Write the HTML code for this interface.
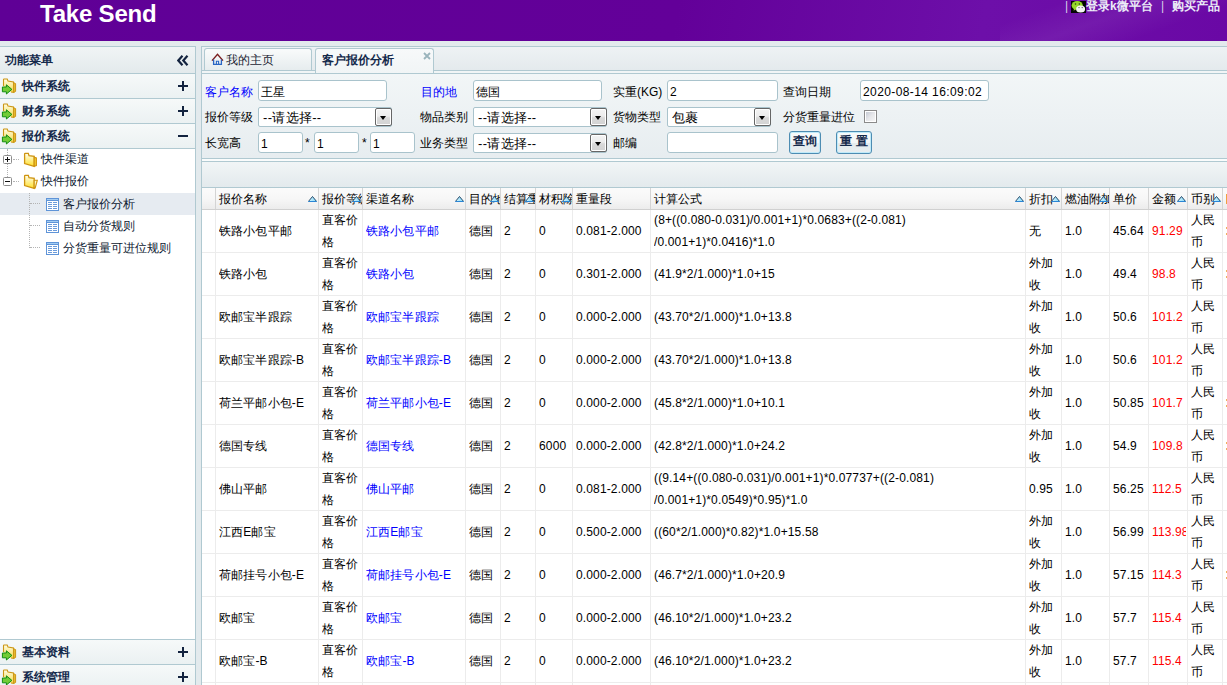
<!DOCTYPE html>
<html><head><meta charset="utf-8">
<style>
*{box-sizing:border-box}
html,body{margin:0;padding:0}
body{width:1227px;height:685px;overflow:hidden;position:relative;background:#e3eaed;font-family:"Liberation Sans",sans-serif;font-size:12px;color:#000}
.a{position:absolute}
.hd{left:0;top:0;width:1227px;height:41px;background:linear-gradient(100deg,#5f0096 0%,#630099 55%,#6d0fa9 80%,#6a08a5 100%);overflow:hidden}
.logo{left:40px;top:2px;font-size:24px;letter-spacing:-0.2px;font-weight:bold;color:#fff;line-height:24px;white-space:nowrap}
.hl{color:#ececf8;top:0px;line-height:13px;white-space:nowrap;font-weight:bold}
.ph{left:0;width:195px;background:linear-gradient(#f0f4f5,#e3eaec);border-bottom:1px solid #b0c9d1}
.pht{left:22px;font-weight:bold;color:#14294b;line-height:14px;white-space:nowrap}
.tr{left:0;width:195px;height:22px}
.trt{line-height:14px;color:#0c1830;white-space:nowrap}
.inp{background:#fff;border:1px solid #a9c3cc;border-radius:3px;height:21px;line-height:19px;padding-top:2px;padding-left:2px;white-space:nowrap}
.sel{background:#fff;border:1px solid #a9c3cc;border-radius:2px;height:20px;line-height:18px;padding-top:1px;padding-left:4px;white-space:nowrap;font-size:13px;letter-spacing:0.3px}
.dd{top:0px;width:17px;height:18px;background:linear-gradient(#f4f4f4 0%,#ececec 45%,#d9d9d9 55%,#d3d3d3 100%);border:1px solid #666;border-radius:2px;box-shadow:inset 0 0 0 1px #fff}
.dd:after{content:"";position:absolute;left:4px;top:7px;border-left:3.5px solid transparent;border-right:3.5px solid transparent;border-top:4px solid #000}
.lb{white-space:nowrap;line-height:14px}
.btn{height:23px;border:1px solid #4d8cb2;border-radius:3px;background:linear-gradient(#f8fafb 0%,#f3f6f7 50%,#e4ebee 52%,#e7edf0 100%);box-shadow:inset 0 0 0 1px #bfeaf9;font-weight:bold;color:#14294b;line-height:19px;text-align:center;white-space:nowrap}
.gh{top:188px;height:21px;background:linear-gradient(#fbfbfb 0%,#f7f7f7 50%,#ececec 100%)}
.hc{top:1px;height:20px;line-height:20px;white-space:nowrap;overflow:hidden;padding-left:4px}
.vl{width:1px;background:#ececec}
.hvl{width:1px;background:#d4d4d4}
.cell{white-space:nowrap;overflow:hidden;line-height:22px;letter-spacing:0.14px}
.lk{color:#0000ff}
.rd{color:#ff0000}
.arr{width:9px;height:6px}
</style></head><body>
<div class="a hd"><div class="a" style="left:1000px;top:-40px;width:260px;height:120px;background:linear-gradient(160deg,rgba(255,255,255,0) 30%,rgba(255,255,255,0.06) 45%,rgba(255,255,255,0) 60%)"></div><div class="a logo">Take Send</div><div class="a hl" style="left:1065px;font-weight:normal;color:#d8d0e8">|</div><svg class="a" style="left:1071px;top:1px" width="15" height="12" viewBox="0 0 15 12"><rect width="15" height="12" fill="#050505"/><ellipse cx="6.2" cy="4.4" rx="5.6" ry="4.3" fill="#96d82a"/><path d="M3 7.5 L2.6 9.8 L5 8.3 Z" fill="#96d82a"/><circle cx="4.5" cy="2.9" r=".75" fill="#2a3a10"/><circle cx="8.3" cy="2.9" r=".75" fill="#2a3a10"/><ellipse cx="9.6" cy="8" rx="4.5" ry="3.5" fill="#f4f4f4"/><circle cx="8" cy="6.6" r=".65" fill="#555"/><circle cx="11.2" cy="6.6" r=".65" fill="#555"/></svg><div class="a hl" style="left:1086px;">登录k微平台</div><div class="a hl" style="left:1161px;font-weight:normal;color:#d8d0e8">|</div><div class="a hl" style="left:1172px;">购买产品</div></div>
<div class="a" style="left:0;top:46px;width:196px;height:639px;background:#fff;border-right:1px solid #b0c9d1;border-top:1px solid #b0c9d1"></div><div class="a ph" style="top:47px;height:27px"></div><div class="a pht" style="left:5px;top:53px">功能菜单</div><svg class="a" style="left:177px;top:55px" width="12" height="11" viewBox="0 0 12 11"><path d="M5.5 0.8 L1.3 5.5 L5.5 10.2 M10.5 0.8 L6.3 5.5 L10.5 10.2" fill="none" stroke="#13233f" stroke-width="2.2"/></svg><div class="a ph" style="top:74px;height:25px;background:linear-gradient(#f6f9f9,#ebf1f2)"></div><svg class="a" style="left:0px;top:76px" width="20" height="20" viewBox="0 0 20 20"><defs><linearGradient id="fg" x1="0" y1="0" x2="0" y2="1"><stop offset="0" stop-color="#fffce0"/><stop offset="1" stop-color="#f6dc50"/></linearGradient></defs><path d="M3.5 10 V3.6 Q3.5 3 4.1 3 H7.2 L8 5 L13.5 6 V16.3 L11 16" fill="url(#fg)" stroke="#cc9614" stroke-width="1.1"/><path d="M13.8 6.8 L15.6 7.6 V15.4 L13.8 16.4 Z" fill="#f0c63a" stroke="#cc9614" stroke-width="1"/><path d="M2.4 11 H6.4 V8.8 L11.9 13.4 L6.4 18 V15.8 H2.4 Z" fill="#72cc36" stroke="#128c12" stroke-width="1"/></svg><div class="a pht" style="top:79px">快件系统</div><svg class="a" style="left:178px;top:81px" width="10" height="10" viewBox="0 0 10 10"><path d="M0 5 H10 M5 0 V10" stroke="#13233f" stroke-width="2"/></svg><div class="a ph" style="top:99px;height:25px;background:linear-gradient(#f6f9f9,#ebf1f2)"></div><svg class="a" style="left:0px;top:101px" width="20" height="20" viewBox="0 0 20 20"><defs><linearGradient id="fg" x1="0" y1="0" x2="0" y2="1"><stop offset="0" stop-color="#fffce0"/><stop offset="1" stop-color="#f6dc50"/></linearGradient></defs><path d="M3.5 10 V3.6 Q3.5 3 4.1 3 H7.2 L8 5 L13.5 6 V16.3 L11 16" fill="url(#fg)" stroke="#cc9614" stroke-width="1.1"/><path d="M13.8 6.8 L15.6 7.6 V15.4 L13.8 16.4 Z" fill="#f0c63a" stroke="#cc9614" stroke-width="1"/><path d="M2.4 11 H6.4 V8.8 L11.9 13.4 L6.4 18 V15.8 H2.4 Z" fill="#72cc36" stroke="#128c12" stroke-width="1"/></svg><div class="a pht" style="top:104px">财务系统</div><svg class="a" style="left:178px;top:106px" width="10" height="10" viewBox="0 0 10 10"><path d="M0 5 H10 M5 0 V10" stroke="#13233f" stroke-width="2"/></svg><div class="a ph" style="top:124px;height:25px;background:linear-gradient(#f6f9f9,#ebf1f2)"></div><svg class="a" style="left:0px;top:126px" width="20" height="20" viewBox="0 0 20 20"><defs><linearGradient id="fg" x1="0" y1="0" x2="0" y2="1"><stop offset="0" stop-color="#fffce0"/><stop offset="1" stop-color="#f6dc50"/></linearGradient></defs><path d="M3.5 10 V3.6 Q3.5 3 4.1 3 H7.2 L8 5 L13.5 6 V16.3 L11 16" fill="url(#fg)" stroke="#cc9614" stroke-width="1.1"/><path d="M13.8 6.8 L15.6 7.6 V15.4 L13.8 16.4 Z" fill="#f0c63a" stroke="#cc9614" stroke-width="1"/><path d="M2.4 11 H6.4 V8.8 L11.9 13.4 L6.4 18 V15.8 H2.4 Z" fill="#72cc36" stroke="#128c12" stroke-width="1"/></svg><div class="a pht" style="top:129px">报价系统</div><svg class="a" style="left:178px;top:131px" width="10" height="10" viewBox="0 0 10 10"><path d="M0 5 H10" stroke="#13233f" stroke-width="2"/></svg><div class="a" style="left:0;top:639px;width:195px;height:1px;background:#b0c9d1"></div><div class="a ph" style="top:640px;height:25px;background:linear-gradient(#f6f9f9,#ebf1f2)"></div><svg class="a" style="left:0px;top:642px" width="20" height="20" viewBox="0 0 20 20"><defs><linearGradient id="fg" x1="0" y1="0" x2="0" y2="1"><stop offset="0" stop-color="#fffce0"/><stop offset="1" stop-color="#f6dc50"/></linearGradient></defs><path d="M3.5 10 V3.6 Q3.5 3 4.1 3 H7.2 L8 5 L13.5 6 V16.3 L11 16" fill="url(#fg)" stroke="#cc9614" stroke-width="1.1"/><path d="M13.8 6.8 L15.6 7.6 V15.4 L13.8 16.4 Z" fill="#f0c63a" stroke="#cc9614" stroke-width="1"/><path d="M2.4 11 H6.4 V8.8 L11.9 13.4 L6.4 18 V15.8 H2.4 Z" fill="#72cc36" stroke="#128c12" stroke-width="1"/></svg><div class="a pht" style="top:645px">基本资料</div><svg class="a" style="left:178px;top:647px" width="10" height="10" viewBox="0 0 10 10"><path d="M0 5 H10 M5 0 V10" stroke="#13233f" stroke-width="2"/></svg><div class="a" style="left:0;top:664px;width:195px;height:1px;background:#b0c9d1"></div><div class="a ph" style="top:665px;height:25px;background:linear-gradient(#f6f9f9,#ebf1f2)"></div><svg class="a" style="left:0px;top:667px" width="20" height="20" viewBox="0 0 20 20"><defs><linearGradient id="fg" x1="0" y1="0" x2="0" y2="1"><stop offset="0" stop-color="#fffce0"/><stop offset="1" stop-color="#f6dc50"/></linearGradient></defs><path d="M3.5 10 V3.6 Q3.5 3 4.1 3 H7.2 L8 5 L13.5 6 V16.3 L11 16" fill="url(#fg)" stroke="#cc9614" stroke-width="1.1"/><path d="M13.8 6.8 L15.6 7.6 V15.4 L13.8 16.4 Z" fill="#f0c63a" stroke="#cc9614" stroke-width="1"/><path d="M2.4 11 H6.4 V8.8 L11.9 13.4 L6.4 18 V15.8 H2.4 Z" fill="#72cc36" stroke="#128c12" stroke-width="1"/></svg><div class="a pht" style="top:670px">系统管理</div><svg class="a" style="left:178px;top:672px" width="10" height="10" viewBox="0 0 10 10"><path d="M0 5 H10 M5 0 V10" stroke="#13233f" stroke-width="2"/></svg><div class="a" style="left:0;top:193px;width:195px;height:22px;background:#e6ebf1"></div><div class="a" style="left:7px;top:149px;width:0;height:6px;border-left:1px dotted #b4b4b4"></div><div class="a" style="left:7px;top:164px;width:0;height:13px;border-left:1px dotted #b4b4b4"></div><div class="a" style="left:13px;top:159px;width:6px;height:0;border-top:1px dotted #b4b4b4"></div><div class="a" style="left:13px;top:181px;width:6px;height:0;border-top:1px dotted #b4b4b4"></div><div class="a" style="left:29px;top:193px;width:0;height:55px;border-left:1px dotted #b4b4b4"></div><div class="a" style="left:30px;top:203px;width:10px;height:0;border-top:1px dotted #b4b4b4"></div><div class="a" style="left:30px;top:225px;width:10px;height:0;border-top:1px dotted #b4b4b4"></div><div class="a" style="left:30px;top:247px;width:10px;height:0;border-top:1px dotted #b4b4b4"></div><svg class="a" style="left:3px;top:155px" width="9" height="9" viewBox="0 0 9 9"><rect x=".5" y=".5" width="8" height="8" rx="1" fill="#fff" stroke="#8c8c8c"/><path d="M2 4.5 H7 M4.5 2 V7" stroke="#111" stroke-width="1"/></svg><svg class="a" style="left:3px;top:177px" width="9" height="9" viewBox="0 0 9 9"><rect x=".5" y=".5" width="8" height="8" rx="1" fill="#fff" stroke="#8c8c8c"/><path d="M2 4.5 H7" stroke="#111" stroke-width="1"/></svg><svg class="a" style="left:20px;top:150px" width="20" height="20" viewBox="0 0 20 20"><defs><linearGradient id="tg" x1="0" y1="0" x2="0" y2="1"><stop offset="0" stop-color="#fffef0"/><stop offset="1" stop-color="#ffe02a"/></linearGradient></defs><path d="M4.6 13.6 V3.9 Q4.6 3.3 5.2 3.3 H8.3 L9 5.6 L14.2 6.4 V16.3 Z" fill="url(#tg)" stroke="#cf9410" stroke-width="1.3"/><path d="M14.2 7.2 L16.4 8 V15.6 L14.2 16.3 Z" fill="#f4cc30" stroke="#cf9410" stroke-width="1.1"/></svg><svg class="a" style="left:20px;top:172px" width="20" height="20" viewBox="0 0 20 20"><defs><linearGradient id="tg" x1="0" y1="0" x2="0" y2="1"><stop offset="0" stop-color="#fffef0"/><stop offset="1" stop-color="#ffe02a"/></linearGradient></defs><path d="M4.6 13.6 V3.9 Q4.6 3.3 5.2 3.3 H8.3 L9 5.6 L14.2 6.4 V16.3 Z" fill="url(#tg)" stroke="#cf9410" stroke-width="1.3"/><path d="M14.2 8.2 L17.3 8.2 L15.2 16 L14.2 16.3 Z" fill="#fff8c0" stroke="#cf9410" stroke-width="1.1"/></svg><div class="a trt" style="left:41px;top:152px">快件渠道</div><div class="a trt" style="left:41px;top:174px">快件报价</div><svg class="a" style="left:46px;top:198px" width="13" height="13" viewBox="0 0 13 13"><rect x=".5" y=".5" width="12" height="12" fill="#fff" stroke="#5f94d8"/><rect x="1" y="1" width="11" height="1" fill="#a4cdf2"/><path d="M1 2.5 H12" stroke="#5f94d8"/><path d="M2 4.5 H6 M7 4.5 H11 M2 6.5 H6 M7 6.5 H11 M2 8.5 H6 M7 8.5 H11 M2 10.5 H6 M7 10.5 H11" stroke="#6b9bdb" stroke-width="1"/></svg><div class="a trt" style="left:63px;top:197px">客户报价分析</div><svg class="a" style="left:46px;top:220px" width="13" height="13" viewBox="0 0 13 13"><rect x=".5" y=".5" width="12" height="12" fill="#fff" stroke="#5f94d8"/><rect x="1" y="1" width="11" height="1" fill="#a4cdf2"/><path d="M1 2.5 H12" stroke="#5f94d8"/><path d="M2 4.5 H6 M7 4.5 H11 M2 6.5 H6 M7 6.5 H11 M2 8.5 H6 M7 8.5 H11 M2 10.5 H6 M7 10.5 H11" stroke="#6b9bdb" stroke-width="1"/></svg><div class="a trt" style="left:63px;top:219px">自动分货规则</div><svg class="a" style="left:46px;top:242px" width="13" height="13" viewBox="0 0 13 13"><rect x=".5" y=".5" width="12" height="12" fill="#fff" stroke="#5f94d8"/><rect x="1" y="1" width="11" height="1" fill="#a4cdf2"/><path d="M1 2.5 H12" stroke="#5f94d8"/><path d="M2 4.5 H6 M7 4.5 H11 M2 6.5 H6 M7 6.5 H11 M2 8.5 H6 M7 8.5 H11 M2 10.5 H6 M7 10.5 H11" stroke="#6b9bdb" stroke-width="1"/></svg><div class="a trt" style="left:63px;top:241px">分货重量可进位规则</div><div class="a" style="left:201px;top:46px;width:1026px;height:639px;background:#fff;border-left:1px solid #b0c9d1;border-top:1px solid #b0c9d1"></div><div class="a" style="left:202px;top:47px;width:1025px;height:24px;background:linear-gradient(#eef2f4,#e4eaed);border-bottom:1px solid #b0c9d1"></div><div class="a" style="left:202px;top:71px;width:1025px;height:3px;background:#f1f5f6;border-bottom:1px solid #b0c9d1"></div><div class="a" style="left:204px;top:48px;width:108px;height:22px;border:1px solid #b0c9d1;border-bottom:none;border-radius:3px 3px 0 0;background:linear-gradient(#f9fbfb,#e6ecee)"></div><svg class="a" style="left:211px;top:53px" width="13" height="13" viewBox="0 0 13 13"><path d="M1 7.6 L6.5 1.2 L12 7.6" fill="none" stroke="#7a1c1c" stroke-width="1.4"/><path d="M2.6 6.6 V11.4 H10.4 V6.6" fill="none" stroke="#2a66c4" stroke-width="1.3"/><path d="M5.4 11.4 V8.2 H7.6 V11.4" fill="none" stroke="#2a66c4" stroke-width="1.1"/></svg><div class="a lb" style="left:226px;top:53px;color:#1c2433">我的主页</div><div class="a" style="left:315px;top:48px;width:119px;height:25px;border:1px solid #b0c9d1;border-bottom:none;border-radius:3px 3px 0 0;background:linear-gradient(#f7f9fa,#f1f5f6)"></div><div class="a lb" style="left:322px;top:53px;font-weight:bold;color:#14294b">客户报价分析</div><svg class="a" style="left:423px;top:52px" width="8" height="8" viewBox="0 0 8 8"><path d="M1 1 L7 7 M7 1 L1 7" stroke="#9ab4bc" stroke-width="1.8"/></svg><div class="a" style="left:202px;top:74px;width:1025px;height:85px;background:linear-gradient(#f2f6f7,#e7edf0);border-bottom:1px solid #b0c9d1"></div><div class="a" style="left:202px;top:159px;width:1025px;height:3px;background:#fafcfc;border-bottom:1px solid #b0c9d1"></div><div class="a" style="left:202px;top:162px;width:1025px;height:26px;background:linear-gradient(#f1f5f6,#e3eaed);border-bottom:1px solid #b0c9d1"></div><div class="a lb" style="left:205px;top:85px;color:#0000ff;">客户名称</div><div class="a inp" style="left:258px;top:80px;width:129px">王星</div><div class="a lb" style="left:421px;top:85px;color:#0000ff;">目的地</div><div class="a inp" style="left:473px;top:80px;width:129px">德国</div><div class="a lb" style="left:613px;top:85px;">实重(KG)</div><div class="a inp" style="left:667px;top:80px;width:111px">2</div><div class="a lb" style="left:783px;top:85px;">查询日期</div><div class="a inp" style="left:860px;top:80px;width:129px;letter-spacing:0.4px">2020-08-14 16:09:02</div><div class="a lb" style="left:205px;top:110px;">报价等级</div><div class="a sel" style="left:258px;top:107px;width:134px">--请选择--<div class="a dd" style="left:116px"></div></div><div class="a lb" style="left:420px;top:110px;">物品类别</div><div class="a sel" style="left:473px;top:107px;width:134px">--请选择--<div class="a dd" style="left:116px"></div></div><div class="a lb" style="left:613px;top:110px;">货物类型</div><div class="a sel" style="left:667px;top:107px;width:104px">包裹<div class="a dd" style="left:86px"></div></div><div class="a lb" style="left:783px;top:110px;">分货重量进位</div><div class="a" style="left:864px;top:110px;width:13px;height:13px;border:1px solid #8a8a8a;background:linear-gradient(135deg,#bfc4cf 0%,#e6e7ea 50%,#f8f8f8 100%);box-shadow:inset 0 0 0 1px #fff"></div><div class="a lb" style="left:205px;top:136px;">长宽高</div><div class="a inp" style="left:258px;top:132px;width:45px">1</div><div class="a lb" style="left:305px;top:136px;">*</div><div class="a inp" style="left:314px;top:132px;width:45px">1</div><div class="a lb" style="left:362px;top:136px;">*</div><div class="a inp" style="left:370px;top:132px;width:45px">1</div><div class="a lb" style="left:420px;top:136px;">业务类型</div><div class="a sel" style="left:473px;top:133px;width:134px">--请选择--<div class="a dd" style="left:116px"></div></div><div class="a lb" style="left:613px;top:136px;">邮编</div><div class="a inp" style="left:667px;top:132px;width:111px"></div><div class="a btn" style="left:789px;top:131px;width:32px">查询</div><div class="a btn" style="left:836px;top:131px;width:36px">重 置</div><div class="a gh" style="left:202px;width:1025px"></div><div class="a" style="left:202px;top:209px;width:1025px;height:1px;background:#d0d0d0"></div><div class="a hvl" style="left:215px;top:188px;height:21px"></div><div class="a" style="left:215px;top:188px;width:103px;height:21px;overflow:hidden"><div class="a hc" style="left:0;width:103px">报价名称</div><svg class="a arr" style="left:93px;top:8px" width="9" height="6" viewBox="0 0 9 6"><defs><linearGradient id="ag1" x1="0" y1="0" x2="1" y2="0"><stop offset="0" stop-color="#d9f6ff"/><stop offset="1" stop-color="#7fd6f7"/></linearGradient></defs><path d="M4.5 0.3 L8.8 5.6 H0.2 Z" fill="url(#ag1)"/><path d="M0.4 5.5 L4.5 0.5 L8.6 5.5" fill="none" stroke="#1a3a5a" stroke-width="0.9"/><path d="M0.3 5.5 H8.7" stroke="#2a86d6" stroke-width="1"/></svg></div><div class="a hvl" style="left:318px;top:188px;height:21px"></div><div class="a" style="left:318px;top:188px;width:44px;height:21px;overflow:hidden"><div class="a hc" style="left:0;width:44px">报价等级</div><svg class="a arr" style="left:34px;top:8px" width="9" height="6" viewBox="0 0 9 6"><defs><linearGradient id="ag2" x1="0" y1="0" x2="1" y2="0"><stop offset="0" stop-color="#d9f6ff"/><stop offset="1" stop-color="#7fd6f7"/></linearGradient></defs><path d="M4.5 0.3 L8.8 5.6 H0.2 Z" fill="url(#ag2)"/><path d="M0.4 5.5 L4.5 0.5 L8.6 5.5" fill="none" stroke="#1a3a5a" stroke-width="0.9"/><path d="M0.3 5.5 H8.7" stroke="#2a86d6" stroke-width="1"/></svg></div><div class="a hvl" style="left:362px;top:188px;height:21px"></div><div class="a" style="left:362px;top:188px;width:103px;height:21px;overflow:hidden"><div class="a hc" style="left:0;width:103px">渠道名称</div><svg class="a arr" style="left:93px;top:8px" width="9" height="6" viewBox="0 0 9 6"><defs><linearGradient id="ag3" x1="0" y1="0" x2="1" y2="0"><stop offset="0" stop-color="#d9f6ff"/><stop offset="1" stop-color="#7fd6f7"/></linearGradient></defs><path d="M4.5 0.3 L8.8 5.6 H0.2 Z" fill="url(#ag3)"/><path d="M0.4 5.5 L4.5 0.5 L8.6 5.5" fill="none" stroke="#1a3a5a" stroke-width="0.9"/><path d="M0.3 5.5 H8.7" stroke="#2a86d6" stroke-width="1"/></svg></div><div class="a hvl" style="left:465px;top:188px;height:21px"></div><div class="a" style="left:465px;top:188px;width:35px;height:21px;overflow:hidden"><div class="a hc" style="left:0;width:35px">目的地</div><svg class="a arr" style="left:25px;top:8px" width="9" height="6" viewBox="0 0 9 6"><defs><linearGradient id="ag4" x1="0" y1="0" x2="1" y2="0"><stop offset="0" stop-color="#d9f6ff"/><stop offset="1" stop-color="#7fd6f7"/></linearGradient></defs><path d="M4.5 0.3 L8.8 5.6 H0.2 Z" fill="url(#ag4)"/><path d="M0.4 5.5 L4.5 0.5 L8.6 5.5" fill="none" stroke="#1a3a5a" stroke-width="0.9"/><path d="M0.3 5.5 H8.7" stroke="#2a86d6" stroke-width="1"/></svg></div><div class="a hvl" style="left:500px;top:188px;height:21px"></div><div class="a" style="left:500px;top:188px;width:35px;height:21px;overflow:hidden"><div class="a hc" style="left:0;width:35px">结算重量</div><svg class="a arr" style="left:25px;top:8px" width="9" height="6" viewBox="0 0 9 6"><defs><linearGradient id="ag5" x1="0" y1="0" x2="1" y2="0"><stop offset="0" stop-color="#d9f6ff"/><stop offset="1" stop-color="#7fd6f7"/></linearGradient></defs><path d="M4.5 0.3 L8.8 5.6 H0.2 Z" fill="url(#ag5)"/><path d="M0.4 5.5 L4.5 0.5 L8.6 5.5" fill="none" stroke="#1a3a5a" stroke-width="0.9"/><path d="M0.3 5.5 H8.7" stroke="#2a86d6" stroke-width="1"/></svg></div><div class="a hvl" style="left:535px;top:188px;height:21px"></div><div class="a" style="left:535px;top:188px;width:37px;height:21px;overflow:hidden"><div class="a hc" style="left:0;width:37px">材积除</div><svg class="a arr" style="left:27px;top:8px" width="9" height="6" viewBox="0 0 9 6"><defs><linearGradient id="ag6" x1="0" y1="0" x2="1" y2="0"><stop offset="0" stop-color="#d9f6ff"/><stop offset="1" stop-color="#7fd6f7"/></linearGradient></defs><path d="M4.5 0.3 L8.8 5.6 H0.2 Z" fill="url(#ag6)"/><path d="M0.4 5.5 L4.5 0.5 L8.6 5.5" fill="none" stroke="#1a3a5a" stroke-width="0.9"/><path d="M0.3 5.5 H8.7" stroke="#2a86d6" stroke-width="1"/></svg></div><div class="a hvl" style="left:572px;top:188px;height:21px"></div><div class="a" style="left:572px;top:188px;width:78px;height:21px;overflow:hidden"><div class="a hc" style="left:0;width:78px">重量段</div></div><div class="a hvl" style="left:650px;top:188px;height:21px"></div><div class="a" style="left:650px;top:188px;width:375px;height:21px;overflow:hidden"><div class="a hc" style="left:0;width:375px">计算公式</div><svg class="a arr" style="left:365px;top:8px" width="9" height="6" viewBox="0 0 9 6"><defs><linearGradient id="ag8" x1="0" y1="0" x2="1" y2="0"><stop offset="0" stop-color="#d9f6ff"/><stop offset="1" stop-color="#7fd6f7"/></linearGradient></defs><path d="M4.5 0.3 L8.8 5.6 H0.2 Z" fill="url(#ag8)"/><path d="M0.4 5.5 L4.5 0.5 L8.6 5.5" fill="none" stroke="#1a3a5a" stroke-width="0.9"/><path d="M0.3 5.5 H8.7" stroke="#2a86d6" stroke-width="1"/></svg></div><div class="a hvl" style="left:1025px;top:188px;height:21px"></div><div class="a" style="left:1025px;top:188px;width:36px;height:21px;overflow:hidden"><div class="a hc" style="left:0;width:36px">折扣</div><svg class="a arr" style="left:26px;top:8px" width="9" height="6" viewBox="0 0 9 6"><defs><linearGradient id="ag9" x1="0" y1="0" x2="1" y2="0"><stop offset="0" stop-color="#d9f6ff"/><stop offset="1" stop-color="#7fd6f7"/></linearGradient></defs><path d="M4.5 0.3 L8.8 5.6 H0.2 Z" fill="url(#ag9)"/><path d="M0.4 5.5 L4.5 0.5 L8.6 5.5" fill="none" stroke="#1a3a5a" stroke-width="0.9"/><path d="M0.3 5.5 H8.7" stroke="#2a86d6" stroke-width="1"/></svg></div><div class="a hvl" style="left:1061px;top:188px;height:21px"></div><div class="a" style="left:1061px;top:188px;width:48px;height:21px;overflow:hidden"><div class="a hc" style="left:0;width:48px">燃油附加</div><svg class="a arr" style="left:38px;top:8px" width="9" height="6" viewBox="0 0 9 6"><defs><linearGradient id="ag10" x1="0" y1="0" x2="1" y2="0"><stop offset="0" stop-color="#d9f6ff"/><stop offset="1" stop-color="#7fd6f7"/></linearGradient></defs><path d="M4.5 0.3 L8.8 5.6 H0.2 Z" fill="url(#ag10)"/><path d="M0.4 5.5 L4.5 0.5 L8.6 5.5" fill="none" stroke="#1a3a5a" stroke-width="0.9"/><path d="M0.3 5.5 H8.7" stroke="#2a86d6" stroke-width="1"/></svg></div><div class="a hvl" style="left:1109px;top:188px;height:21px"></div><div class="a" style="left:1109px;top:188px;width:39px;height:21px;overflow:hidden"><div class="a hc" style="left:0;width:39px">单价</div></div><div class="a hvl" style="left:1148px;top:188px;height:21px"></div><div class="a" style="left:1148px;top:188px;width:39px;height:21px;overflow:hidden"><div class="a hc" style="left:0;width:39px">金额</div><svg class="a arr" style="left:29px;top:8px" width="9" height="6" viewBox="0 0 9 6"><defs><linearGradient id="ag12" x1="0" y1="0" x2="1" y2="0"><stop offset="0" stop-color="#d9f6ff"/><stop offset="1" stop-color="#7fd6f7"/></linearGradient></defs><path d="M4.5 0.3 L8.8 5.6 H0.2 Z" fill="url(#ag12)"/><path d="M0.4 5.5 L4.5 0.5 L8.6 5.5" fill="none" stroke="#1a3a5a" stroke-width="0.9"/><path d="M0.3 5.5 H8.7" stroke="#2a86d6" stroke-width="1"/></svg></div><div class="a hvl" style="left:1187px;top:188px;height:21px"></div><div class="a" style="left:1187px;top:188px;width:35px;height:21px;overflow:hidden"><div class="a hc" style="left:0;width:35px">币别</div><svg class="a arr" style="left:25px;top:8px" width="9" height="6" viewBox="0 0 9 6"><defs><linearGradient id="ag13" x1="0" y1="0" x2="1" y2="0"><stop offset="0" stop-color="#d9f6ff"/><stop offset="1" stop-color="#7fd6f7"/></linearGradient></defs><path d="M4.5 0.3 L8.8 5.6 H0.2 Z" fill="url(#ag13)"/><path d="M0.4 5.5 L4.5 0.5 L8.6 5.5" fill="none" stroke="#1a3a5a" stroke-width="0.9"/><path d="M0.3 5.5 H8.7" stroke="#2a86d6" stroke-width="1"/></svg></div><div class="a hvl" style="left:1222px;top:188px;height:21px"></div><div class="a" style="left:1222px;top:188px;width:78px;height:21px;overflow:hidden"><div class="a hc" style="left:0;width:78px"></div></div><div class="a hvl" style="left:1300px;top:188px;height:21px"></div><div class="a" style="left:1226px;top:194px;width:1px;height:10px;background:#f0a040"></div><div class="a cell" style="left:219px;top:210px;width:98px;height:42px;display:flex;align-items:center"><div>铁路小包平邮</div></div><div class="a cell" style="left:322px;top:210px;width:39px;height:42px;display:flex;align-items:center"><div>直客价<br>格</div></div><div class="a cell lk" style="left:366px;top:210px;width:98px;height:42px;display:flex;align-items:center"><div>铁路小包平邮</div></div><div class="a cell" style="left:469px;top:210px;width:30px;height:42px;display:flex;align-items:center"><div>德国</div></div><div class="a cell" style="left:504px;top:210px;width:30px;height:42px;display:flex;align-items:center"><div>2</div></div><div class="a cell" style="left:539px;top:210px;width:32px;height:42px;display:flex;align-items:center"><div>0</div></div><div class="a cell" style="left:576px;top:210px;width:73px;height:42px;display:flex;align-items:center"><div>0.081-2.000</div></div><div class="a cell" style="left:654px;top:210px;width:370px;height:42px;display:flex;align-items:center"><div>(8+((0.080-0.031)/0.001+1)*0.0683+((2-0.081)<br>/0.001+1)*0.0416)*1.0</div></div><div class="a cell" style="left:1029px;top:210px;width:31px;height:42px;display:flex;align-items:center"><div>无</div></div><div class="a cell" style="left:1065px;top:210px;width:43px;height:42px;display:flex;align-items:center"><div>1.0</div></div><div class="a cell" style="left:1113px;top:210px;width:34px;height:42px;display:flex;align-items:center"><div>45.64</div></div><div class="a cell rd" style="left:1152px;top:210px;width:34px;height:42px;display:flex;align-items:center"><div>91.29</div></div><div class="a cell" style="left:1191px;top:210px;width:30px;height:42px;display:flex;align-items:center"><div>人民<br>币</div></div><div class="a cell" style="left:1226px;top:210px;width:73px;height:42px;display:flex;align-items:center"><div></div></div><div class="a" style="left:202px;top:252px;width:1025px;height:1px;background:#ececec"></div><div class="a cell" style="left:219px;top:253px;width:98px;height:42px;display:flex;align-items:center"><div>铁路小包</div></div><div class="a cell" style="left:322px;top:253px;width:39px;height:42px;display:flex;align-items:center"><div>直客价<br>格</div></div><div class="a cell lk" style="left:366px;top:253px;width:98px;height:42px;display:flex;align-items:center"><div>铁路小包</div></div><div class="a cell" style="left:469px;top:253px;width:30px;height:42px;display:flex;align-items:center"><div>德国</div></div><div class="a cell" style="left:504px;top:253px;width:30px;height:42px;display:flex;align-items:center"><div>2</div></div><div class="a cell" style="left:539px;top:253px;width:32px;height:42px;display:flex;align-items:center"><div>0</div></div><div class="a cell" style="left:576px;top:253px;width:73px;height:42px;display:flex;align-items:center"><div>0.301-2.000</div></div><div class="a cell" style="left:654px;top:253px;width:370px;height:42px;display:flex;align-items:center"><div>(41.9*2/1.000)*1.0+15</div></div><div class="a cell" style="left:1029px;top:253px;width:31px;height:42px;display:flex;align-items:center"><div>外加<br>收</div></div><div class="a cell" style="left:1065px;top:253px;width:43px;height:42px;display:flex;align-items:center"><div>1.0</div></div><div class="a cell" style="left:1113px;top:253px;width:34px;height:42px;display:flex;align-items:center"><div>49.4</div></div><div class="a cell rd" style="left:1152px;top:253px;width:34px;height:42px;display:flex;align-items:center"><div>98.8</div></div><div class="a cell" style="left:1191px;top:253px;width:30px;height:42px;display:flex;align-items:center"><div>人民<br>币</div></div><div class="a cell" style="left:1226px;top:253px;width:73px;height:42px;display:flex;align-items:center"><div></div></div><div class="a" style="left:202px;top:295px;width:1025px;height:1px;background:#ececec"></div><div class="a cell" style="left:219px;top:296px;width:98px;height:42px;display:flex;align-items:center"><div>欧邮宝半跟踪</div></div><div class="a cell" style="left:322px;top:296px;width:39px;height:42px;display:flex;align-items:center"><div>直客价<br>格</div></div><div class="a cell lk" style="left:366px;top:296px;width:98px;height:42px;display:flex;align-items:center"><div>欧邮宝半跟踪</div></div><div class="a cell" style="left:469px;top:296px;width:30px;height:42px;display:flex;align-items:center"><div>德国</div></div><div class="a cell" style="left:504px;top:296px;width:30px;height:42px;display:flex;align-items:center"><div>2</div></div><div class="a cell" style="left:539px;top:296px;width:32px;height:42px;display:flex;align-items:center"><div>0</div></div><div class="a cell" style="left:576px;top:296px;width:73px;height:42px;display:flex;align-items:center"><div>0.000-2.000</div></div><div class="a cell" style="left:654px;top:296px;width:370px;height:42px;display:flex;align-items:center"><div>(43.70*2/1.000)*1.0+13.8</div></div><div class="a cell" style="left:1029px;top:296px;width:31px;height:42px;display:flex;align-items:center"><div>外加<br>收</div></div><div class="a cell" style="left:1065px;top:296px;width:43px;height:42px;display:flex;align-items:center"><div>1.0</div></div><div class="a cell" style="left:1113px;top:296px;width:34px;height:42px;display:flex;align-items:center"><div>50.6</div></div><div class="a cell rd" style="left:1152px;top:296px;width:34px;height:42px;display:flex;align-items:center"><div>101.2</div></div><div class="a cell" style="left:1191px;top:296px;width:30px;height:42px;display:flex;align-items:center"><div>人民<br>币</div></div><div class="a cell" style="left:1226px;top:296px;width:73px;height:42px;display:flex;align-items:center"><div></div></div><div class="a" style="left:202px;top:338px;width:1025px;height:1px;background:#ececec"></div><div class="a cell" style="left:219px;top:339px;width:98px;height:42px;display:flex;align-items:center"><div>欧邮宝半跟踪-B</div></div><div class="a cell" style="left:322px;top:339px;width:39px;height:42px;display:flex;align-items:center"><div>直客价<br>格</div></div><div class="a cell lk" style="left:366px;top:339px;width:98px;height:42px;display:flex;align-items:center"><div>欧邮宝半跟踪-B</div></div><div class="a cell" style="left:469px;top:339px;width:30px;height:42px;display:flex;align-items:center"><div>德国</div></div><div class="a cell" style="left:504px;top:339px;width:30px;height:42px;display:flex;align-items:center"><div>2</div></div><div class="a cell" style="left:539px;top:339px;width:32px;height:42px;display:flex;align-items:center"><div>0</div></div><div class="a cell" style="left:576px;top:339px;width:73px;height:42px;display:flex;align-items:center"><div>0.000-2.000</div></div><div class="a cell" style="left:654px;top:339px;width:370px;height:42px;display:flex;align-items:center"><div>(43.70*2/1.000)*1.0+13.8</div></div><div class="a cell" style="left:1029px;top:339px;width:31px;height:42px;display:flex;align-items:center"><div>外加<br>收</div></div><div class="a cell" style="left:1065px;top:339px;width:43px;height:42px;display:flex;align-items:center"><div>1.0</div></div><div class="a cell" style="left:1113px;top:339px;width:34px;height:42px;display:flex;align-items:center"><div>50.6</div></div><div class="a cell rd" style="left:1152px;top:339px;width:34px;height:42px;display:flex;align-items:center"><div>101.2</div></div><div class="a cell" style="left:1191px;top:339px;width:30px;height:42px;display:flex;align-items:center"><div>人民<br>币</div></div><div class="a cell" style="left:1226px;top:339px;width:73px;height:42px;display:flex;align-items:center"><div></div></div><div class="a" style="left:202px;top:381px;width:1025px;height:1px;background:#ececec"></div><div class="a cell" style="left:219px;top:382px;width:98px;height:42px;display:flex;align-items:center"><div>荷兰平邮小包-E</div></div><div class="a cell" style="left:322px;top:382px;width:39px;height:42px;display:flex;align-items:center"><div>直客价<br>格</div></div><div class="a cell lk" style="left:366px;top:382px;width:98px;height:42px;display:flex;align-items:center"><div>荷兰平邮小包-E</div></div><div class="a cell" style="left:469px;top:382px;width:30px;height:42px;display:flex;align-items:center"><div>德国</div></div><div class="a cell" style="left:504px;top:382px;width:30px;height:42px;display:flex;align-items:center"><div>2</div></div><div class="a cell" style="left:539px;top:382px;width:32px;height:42px;display:flex;align-items:center"><div>0</div></div><div class="a cell" style="left:576px;top:382px;width:73px;height:42px;display:flex;align-items:center"><div>0.000-2.000</div></div><div class="a cell" style="left:654px;top:382px;width:370px;height:42px;display:flex;align-items:center"><div>(45.8*2/1.000)*1.0+10.1</div></div><div class="a cell" style="left:1029px;top:382px;width:31px;height:42px;display:flex;align-items:center"><div>外加<br>收</div></div><div class="a cell" style="left:1065px;top:382px;width:43px;height:42px;display:flex;align-items:center"><div>1.0</div></div><div class="a cell" style="left:1113px;top:382px;width:34px;height:42px;display:flex;align-items:center"><div>50.85</div></div><div class="a cell rd" style="left:1152px;top:382px;width:34px;height:42px;display:flex;align-items:center"><div>101.7</div></div><div class="a cell" style="left:1191px;top:382px;width:30px;height:42px;display:flex;align-items:center"><div>人民<br>币</div></div><div class="a cell" style="left:1226px;top:382px;width:73px;height:42px;display:flex;align-items:center"><div></div></div><div class="a" style="left:202px;top:424px;width:1025px;height:1px;background:#ececec"></div><div class="a cell" style="left:219px;top:425px;width:98px;height:42px;display:flex;align-items:center"><div>德国专线</div></div><div class="a cell" style="left:322px;top:425px;width:39px;height:42px;display:flex;align-items:center"><div>直客价<br>格</div></div><div class="a cell lk" style="left:366px;top:425px;width:98px;height:42px;display:flex;align-items:center"><div>德国专线</div></div><div class="a cell" style="left:469px;top:425px;width:30px;height:42px;display:flex;align-items:center"><div>德国</div></div><div class="a cell" style="left:504px;top:425px;width:30px;height:42px;display:flex;align-items:center"><div>2</div></div><div class="a cell" style="left:539px;top:425px;width:32px;height:42px;display:flex;align-items:center"><div>6000</div></div><div class="a cell" style="left:576px;top:425px;width:73px;height:42px;display:flex;align-items:center"><div>0.000-2.000</div></div><div class="a cell" style="left:654px;top:425px;width:370px;height:42px;display:flex;align-items:center"><div>(42.8*2/1.000)*1.0+24.2</div></div><div class="a cell" style="left:1029px;top:425px;width:31px;height:42px;display:flex;align-items:center"><div>外加<br>收</div></div><div class="a cell" style="left:1065px;top:425px;width:43px;height:42px;display:flex;align-items:center"><div>1.0</div></div><div class="a cell" style="left:1113px;top:425px;width:34px;height:42px;display:flex;align-items:center"><div>54.9</div></div><div class="a cell rd" style="left:1152px;top:425px;width:34px;height:42px;display:flex;align-items:center"><div>109.8</div></div><div class="a cell" style="left:1191px;top:425px;width:30px;height:42px;display:flex;align-items:center"><div>人民<br>币</div></div><div class="a cell" style="left:1226px;top:425px;width:73px;height:42px;display:flex;align-items:center"><div></div></div><div class="a" style="left:202px;top:467px;width:1025px;height:1px;background:#ececec"></div><div class="a cell" style="left:219px;top:468px;width:98px;height:42px;display:flex;align-items:center"><div>佛山平邮</div></div><div class="a cell" style="left:322px;top:468px;width:39px;height:42px;display:flex;align-items:center"><div>直客价<br>格</div></div><div class="a cell lk" style="left:366px;top:468px;width:98px;height:42px;display:flex;align-items:center"><div>佛山平邮</div></div><div class="a cell" style="left:469px;top:468px;width:30px;height:42px;display:flex;align-items:center"><div>德国</div></div><div class="a cell" style="left:504px;top:468px;width:30px;height:42px;display:flex;align-items:center"><div>2</div></div><div class="a cell" style="left:539px;top:468px;width:32px;height:42px;display:flex;align-items:center"><div>0</div></div><div class="a cell" style="left:576px;top:468px;width:73px;height:42px;display:flex;align-items:center"><div>0.081-2.000</div></div><div class="a cell" style="left:654px;top:468px;width:370px;height:42px;display:flex;align-items:center"><div>((9.14+((0.080-0.031)/0.001+1)*0.07737+((2-0.081)<br>/0.001+1)*0.0549)*0.95)*1.0</div></div><div class="a cell" style="left:1029px;top:468px;width:31px;height:42px;display:flex;align-items:center"><div>0.95</div></div><div class="a cell" style="left:1065px;top:468px;width:43px;height:42px;display:flex;align-items:center"><div>1.0</div></div><div class="a cell" style="left:1113px;top:468px;width:34px;height:42px;display:flex;align-items:center"><div>56.25</div></div><div class="a cell rd" style="left:1152px;top:468px;width:34px;height:42px;display:flex;align-items:center"><div>112.5</div></div><div class="a cell" style="left:1191px;top:468px;width:30px;height:42px;display:flex;align-items:center"><div>人民<br>币</div></div><div class="a cell" style="left:1226px;top:468px;width:73px;height:42px;display:flex;align-items:center"><div></div></div><div class="a" style="left:202px;top:510px;width:1025px;height:1px;background:#ececec"></div><div class="a cell" style="left:219px;top:511px;width:98px;height:42px;display:flex;align-items:center"><div>江西E邮宝</div></div><div class="a cell" style="left:322px;top:511px;width:39px;height:42px;display:flex;align-items:center"><div>直客价<br>格</div></div><div class="a cell lk" style="left:366px;top:511px;width:98px;height:42px;display:flex;align-items:center"><div>江西E邮宝</div></div><div class="a cell" style="left:469px;top:511px;width:30px;height:42px;display:flex;align-items:center"><div>德国</div></div><div class="a cell" style="left:504px;top:511px;width:30px;height:42px;display:flex;align-items:center"><div>2</div></div><div class="a cell" style="left:539px;top:511px;width:32px;height:42px;display:flex;align-items:center"><div>0</div></div><div class="a cell" style="left:576px;top:511px;width:73px;height:42px;display:flex;align-items:center"><div>0.500-2.000</div></div><div class="a cell" style="left:654px;top:511px;width:370px;height:42px;display:flex;align-items:center"><div>((60*2/1.000)*0.82)*1.0+15.58</div></div><div class="a cell" style="left:1029px;top:511px;width:31px;height:42px;display:flex;align-items:center"><div>外加<br>收</div></div><div class="a cell" style="left:1065px;top:511px;width:43px;height:42px;display:flex;align-items:center"><div>1.0</div></div><div class="a cell" style="left:1113px;top:511px;width:34px;height:42px;display:flex;align-items:center"><div>56.99</div></div><div class="a cell rd" style="left:1152px;top:511px;width:34px;height:42px;display:flex;align-items:center"><div>113.98</div></div><div class="a cell" style="left:1191px;top:511px;width:30px;height:42px;display:flex;align-items:center"><div>人民<br>币</div></div><div class="a cell" style="left:1226px;top:511px;width:73px;height:42px;display:flex;align-items:center"><div></div></div><div class="a" style="left:202px;top:553px;width:1025px;height:1px;background:#ececec"></div><div class="a cell" style="left:219px;top:554px;width:98px;height:42px;display:flex;align-items:center"><div>荷邮挂号小包-E</div></div><div class="a cell" style="left:322px;top:554px;width:39px;height:42px;display:flex;align-items:center"><div>直客价<br>格</div></div><div class="a cell lk" style="left:366px;top:554px;width:98px;height:42px;display:flex;align-items:center"><div>荷邮挂号小包-E</div></div><div class="a cell" style="left:469px;top:554px;width:30px;height:42px;display:flex;align-items:center"><div>德国</div></div><div class="a cell" style="left:504px;top:554px;width:30px;height:42px;display:flex;align-items:center"><div>2</div></div><div class="a cell" style="left:539px;top:554px;width:32px;height:42px;display:flex;align-items:center"><div>0</div></div><div class="a cell" style="left:576px;top:554px;width:73px;height:42px;display:flex;align-items:center"><div>0.000-2.000</div></div><div class="a cell" style="left:654px;top:554px;width:370px;height:42px;display:flex;align-items:center"><div>(46.7*2/1.000)*1.0+20.9</div></div><div class="a cell" style="left:1029px;top:554px;width:31px;height:42px;display:flex;align-items:center"><div>外加<br>收</div></div><div class="a cell" style="left:1065px;top:554px;width:43px;height:42px;display:flex;align-items:center"><div>1.0</div></div><div class="a cell" style="left:1113px;top:554px;width:34px;height:42px;display:flex;align-items:center"><div>57.15</div></div><div class="a cell rd" style="left:1152px;top:554px;width:34px;height:42px;display:flex;align-items:center"><div>114.3</div></div><div class="a cell" style="left:1191px;top:554px;width:30px;height:42px;display:flex;align-items:center"><div>人民<br>币</div></div><div class="a cell" style="left:1226px;top:554px;width:73px;height:42px;display:flex;align-items:center"><div></div></div><div class="a" style="left:202px;top:596px;width:1025px;height:1px;background:#ececec"></div><div class="a cell" style="left:219px;top:597px;width:98px;height:42px;display:flex;align-items:center"><div>欧邮宝</div></div><div class="a cell" style="left:322px;top:597px;width:39px;height:42px;display:flex;align-items:center"><div>直客价<br>格</div></div><div class="a cell lk" style="left:366px;top:597px;width:98px;height:42px;display:flex;align-items:center"><div>欧邮宝</div></div><div class="a cell" style="left:469px;top:597px;width:30px;height:42px;display:flex;align-items:center"><div>德国</div></div><div class="a cell" style="left:504px;top:597px;width:30px;height:42px;display:flex;align-items:center"><div>2</div></div><div class="a cell" style="left:539px;top:597px;width:32px;height:42px;display:flex;align-items:center"><div>0</div></div><div class="a cell" style="left:576px;top:597px;width:73px;height:42px;display:flex;align-items:center"><div>0.000-2.000</div></div><div class="a cell" style="left:654px;top:597px;width:370px;height:42px;display:flex;align-items:center"><div>(46.10*2/1.000)*1.0+23.2</div></div><div class="a cell" style="left:1029px;top:597px;width:31px;height:42px;display:flex;align-items:center"><div>外加<br>收</div></div><div class="a cell" style="left:1065px;top:597px;width:43px;height:42px;display:flex;align-items:center"><div>1.0</div></div><div class="a cell" style="left:1113px;top:597px;width:34px;height:42px;display:flex;align-items:center"><div>57.7</div></div><div class="a cell rd" style="left:1152px;top:597px;width:34px;height:42px;display:flex;align-items:center"><div>115.4</div></div><div class="a cell" style="left:1191px;top:597px;width:30px;height:42px;display:flex;align-items:center"><div>人民<br>币</div></div><div class="a cell" style="left:1226px;top:597px;width:73px;height:42px;display:flex;align-items:center"><div></div></div><div class="a" style="left:202px;top:639px;width:1025px;height:1px;background:#ececec"></div><div class="a cell" style="left:219px;top:640px;width:98px;height:42px;display:flex;align-items:center"><div>欧邮宝-B</div></div><div class="a cell" style="left:322px;top:640px;width:39px;height:42px;display:flex;align-items:center"><div>直客价<br>格</div></div><div class="a cell lk" style="left:366px;top:640px;width:98px;height:42px;display:flex;align-items:center"><div>欧邮宝-B</div></div><div class="a cell" style="left:469px;top:640px;width:30px;height:42px;display:flex;align-items:center"><div>德国</div></div><div class="a cell" style="left:504px;top:640px;width:30px;height:42px;display:flex;align-items:center"><div>2</div></div><div class="a cell" style="left:539px;top:640px;width:32px;height:42px;display:flex;align-items:center"><div>0</div></div><div class="a cell" style="left:576px;top:640px;width:73px;height:42px;display:flex;align-items:center"><div>0.000-2.000</div></div><div class="a cell" style="left:654px;top:640px;width:370px;height:42px;display:flex;align-items:center"><div>(46.10*2/1.000)*1.0+23.2</div></div><div class="a cell" style="left:1029px;top:640px;width:31px;height:42px;display:flex;align-items:center"><div>外加<br>收</div></div><div class="a cell" style="left:1065px;top:640px;width:43px;height:42px;display:flex;align-items:center"><div>1.0</div></div><div class="a cell" style="left:1113px;top:640px;width:34px;height:42px;display:flex;align-items:center"><div>57.7</div></div><div class="a cell rd" style="left:1152px;top:640px;width:34px;height:42px;display:flex;align-items:center"><div>115.4</div></div><div class="a cell" style="left:1191px;top:640px;width:30px;height:42px;display:flex;align-items:center"><div>人民<br>币</div></div><div class="a cell" style="left:1226px;top:640px;width:73px;height:42px;display:flex;align-items:center"><div></div></div><div class="a" style="left:202px;top:682px;width:1025px;height:1px;background:#ececec"></div><div class="a vl" style="left:215px;top:210px;height:475px"></div><div class="a vl" style="left:318px;top:210px;height:475px"></div><div class="a vl" style="left:362px;top:210px;height:475px"></div><div class="a vl" style="left:465px;top:210px;height:475px"></div><div class="a vl" style="left:500px;top:210px;height:475px"></div><div class="a vl" style="left:535px;top:210px;height:475px"></div><div class="a vl" style="left:572px;top:210px;height:475px"></div><div class="a vl" style="left:650px;top:210px;height:475px"></div><div class="a vl" style="left:1025px;top:210px;height:475px"></div><div class="a vl" style="left:1061px;top:210px;height:475px"></div><div class="a vl" style="left:1109px;top:210px;height:475px"></div><div class="a vl" style="left:1148px;top:210px;height:475px"></div><div class="a vl" style="left:1187px;top:210px;height:475px"></div><div class="a vl" style="left:1222px;top:210px;height:475px"></div><div class="a" style="left:1226px;top:227px;width:1px;height:2px;background:#f0b060"></div><div class="a" style="left:1226px;top:233px;width:1px;height:2px;background:#f0b060"></div><div class="a" style="left:1226px;top:270px;width:1px;height:2px;background:#f0b060"></div><div class="a" style="left:1226px;top:276px;width:1px;height:2px;background:#f0b060"></div><div class="a" style="left:1226px;top:399px;width:1px;height:2px;background:#f0b060"></div><div class="a" style="left:1226px;top:405px;width:1px;height:2px;background:#f0b060"></div><div class="a" style="left:1226px;top:442px;width:1px;height:2px;background:#f0b060"></div><div class="a" style="left:1226px;top:448px;width:1px;height:2px;background:#f0b060"></div><div class="a" style="left:1226px;top:571px;width:1px;height:2px;background:#f0b060"></div><div class="a" style="left:1226px;top:577px;width:1px;height:2px;background:#f0b060"></div></body></html>
